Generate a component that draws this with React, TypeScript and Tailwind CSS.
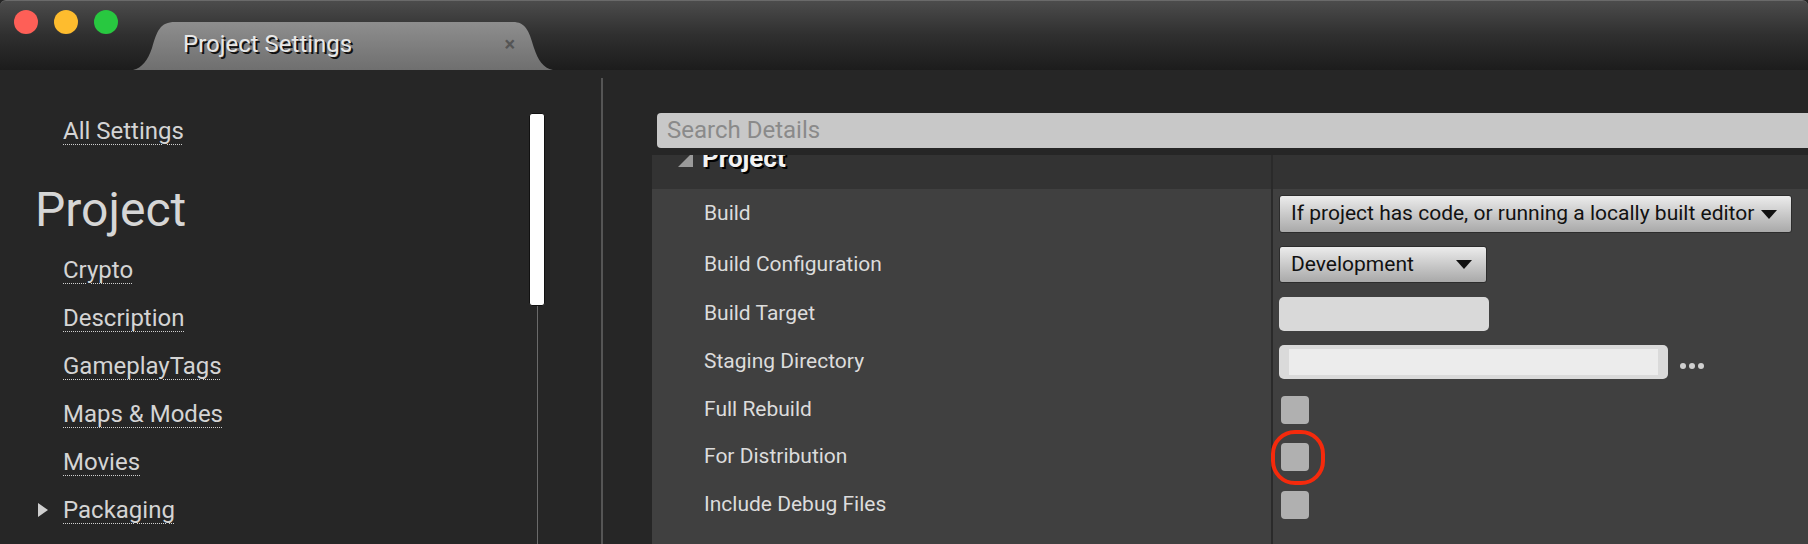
import * as React from "react";

const navItems = [
  { label: "Crypto" },
  { label: "Description" },
  { label: "GameplayTags" },
  { label: "Maps & Modes" },
  { label: "Movies" },
  { label: "Packaging", expandable: true },
];

function TitleBar() {
  return (
    <div className="flex h-[70px] shrink-0 rounded-t-[6px] border-t border-[#6a6a6a] bg-gradient-to-b from-[#4c4c4c] via-[#2f2f2f] to-[#1c1c1c]">
      <div className="flex gap-[16px] pl-[14px] pt-[9px]">
        <span className="h-[24px] w-[24px] rounded-full bg-[#fe5f57]" />
        <span className="h-[24px] w-[24px] rounded-full bg-[#febc2e]" />
        <span className="h-[24px] w-[24px] rounded-full bg-[#28c840]" />
      </div>
      <div className="relative ml-[15px] mt-auto h-[48px] w-[420px]">
        <svg className="absolute inset-0" width="420" height="48" viewBox="0 0 420 48">
          <defs>
            <linearGradient id="tabfill" x1="0" y1="0" x2="0" y2="1">
              <stop offset="0" stopColor="#8e8e8e" />
              <stop offset="1" stopColor="#6f6f6f" />
            </linearGradient>
          </defs>
          <path
            d="M0 48 C9 46 15 38 19 26 C24 9 27 0 42 0 L380 0 C392 0 396 8 401 26 C405 38 410 46 420 48 Z"
            fill="url(#tabfill)"
          />
        </svg>
        <div className="relative flex h-full items-center pb-[4px] pl-[50px] pr-[38px]">
          <span className="flex-1 text-[24px] text-[#e8e8e8] [text-shadow:2px_2px_0_#111]">
            Project Settings
          </span>
          <span className="text-[20px] font-bold text-[#555]">×</span>
        </div>
      </div>
    </div>
  );
}

function NavLink({ label }: { label: string }) {
  return (
    <span className="underline decoration-dotted decoration-[#d0d0d0] decoration-1 underline-offset-[5px]">
      {label}
    </span>
  );
}

function Sidebar() {
  return (
    <div className="flex w-[601px] shrink-0">
      <div className="flex-1 pt-[37px] text-[24px] text-[#d4d4d4]">
        <div className="flex h-[48px] items-center pl-[63px] leading-[48px]">
          <NavLink label="All Settings" />
        </div>
        <div className="mb-[8px] mt-[27px] h-[56px] pl-[35px] text-[48px] leading-[56px] text-[#d6d6d6]">
          Project
        </div>
        {navItems.map((item) => (
          <div key={item.label} className="relative flex h-[48px] items-center pl-[63px] leading-[48px]">
            {item.expandable && (
              <svg className="absolute left-[37px] top-[16px]" width="12" height="16" viewBox="0 0 12 16">
                <path d="M1 1 L11 8 L1 15 Z" fill="#cfcfcf" />
              </svg>
            )}
            <NavLink label={item.label} />
          </div>
        ))}
      </div>
      <div className="mr-[56px] flex w-[16px] flex-col items-center pt-[43px]">
        <div className="h-[193px] w-[16px] rounded-[3px] border border-[#111] bg-white" />
        <div className="w-px flex-1 bg-[#6a6a6a]" />
      </div>
    </div>
  );
}

function Dropdown({ text, className }: { text: string; className: string }) {
  return (
    <div
      className={
        "flex items-center justify-between rounded-[3px] border border-[#2c2c2c] bg-gradient-to-b from-[#ececec] to-[#a9a9a9] pl-[11px] pr-[14px] text-[21px] text-[#111] " +
        className
      }
    >
      <span>{text}</span>
      <svg width="16" height="9" viewBox="0 0 16 9">
        <path d="M0 0 L16 0 L8 9 Z" fill="#111" />
      </svg>
    </div>
  );
}

function Checkbox() {
  return <div className="ml-[2px] h-[28px] w-[28px] rounded-[4px] bg-[#b0b0b0]" />;
}

type Row = { label: string; h: string; value: React.ReactNode };

const rows: Row[] = [
  {
    label: "Build",
    h: "h-[50px]",
    value: <Dropdown text="If project has code, or running a locally built editor" className="h-[38px] w-[513px]" />,
  },
  {
    label: "Build Configuration",
    h: "h-[51px]",
    value: <Dropdown text="Development" className="h-[37px] w-[208px]" />,
  },
  {
    label: "Build Target",
    h: "h-[48px]",
    value: <div className="h-[34px] w-[210px] rounded-[5px] bg-[#d9d9d9]" />,
  },
  {
    label: "Staging Directory",
    h: "h-[48px]",
    value: (
      <div className="flex items-center">
        <div className="flex h-[34px] w-[389px] items-center rounded-[5px] bg-[#dadada] px-[10px]">
          <div className="h-[26px] flex-1 bg-[#ececec]" />
        </div>
        <div className="ml-[12px] mt-[8px] flex gap-[3px]">
          <span className="h-[6px] w-[6px] rounded-full bg-[#d0d0d0]" />
          <span className="h-[6px] w-[6px] rounded-full bg-[#d0d0d0]" />
          <span className="h-[6px] w-[6px] rounded-full bg-[#d0d0d0]" />
        </div>
      </div>
    ),
  },
  { label: "Full Rebuild", h: "h-[47px]", value: <Checkbox /> },
  {
    label: "For Distribution",
    h: "h-[48px]",
    value: (
      <div className="relative">
        <Checkbox />
        <div className="absolute left-[-8px] top-[-13px] h-[55px] w-[54px] rounded-[24px] border-[4px] border-[#f52a0c]" />
      </div>
    ),
  },
  { label: "Include Debug Files", h: "h-[48px]", value: <Checkbox /> },
];

function Details() {
  return (
    <div className="flex flex-1 flex-col pl-[49px]">
      <div className="ml-[5px] mt-[43px] h-[35px] shrink-0 rounded-l-[4px] bg-[#c8c8c8] pl-[10px] text-[24px] leading-[35px] text-[#8a8a8a]">
        Search Details
      </div>
      <div className="mt-[7px] flex flex-1 flex-col overflow-hidden bg-[#404040]">
        <div className="flex h-[34px] shrink-0 bg-[#333333]">
          <div className="flex w-[621px] items-start border-r-2 border-[#2a2a2a] pl-[26px]">
            <div className="-mt-[10px] flex items-end">
              <svg className="mb-[4px]" width="15" height="15" viewBox="0 0 15 15">
                <path d="M15 0 L15 15 L0 15 Z" fill="#9a9a9a" />
              </svg>
              <span className="ml-[9px] text-[26px] font-bold leading-[26px] text-[#f2f2f2] [text-shadow:2px_2px_0_#000]">
                Project
              </span>
            </div>
          </div>
          <div className="flex-1" />
        </div>
        {rows.map((row) => (
          <div key={row.label} className={"flex shrink-0 " + row.h}>
            <div className="flex w-[621px] items-center border-r-2 border-[#2a2a2a] pl-[52px] text-[21px] text-[#dcdcdc]">
              {row.label}
            </div>
            <div className="flex flex-1 items-center pl-[6px]">{row.value}</div>
          </div>
        ))}
        <div className="flex flex-1">
          <div className="w-[621px] border-r-2 border-[#2a2a2a]" />
        </div>
      </div>
    </div>
  );
}

export default function App() {
  return (
    <div className="flex h-[544px] w-[1808px] flex-col overflow-hidden bg-[#262626] font-['Roboto',sans-serif]">
      <TitleBar />
      <div className="flex flex-1 overflow-hidden">
        <Sidebar />
        <div className="mt-[8px] w-[2px] shrink-0 bg-[#555555]" />
        <Details />
      </div>
    </div>
  );
}
